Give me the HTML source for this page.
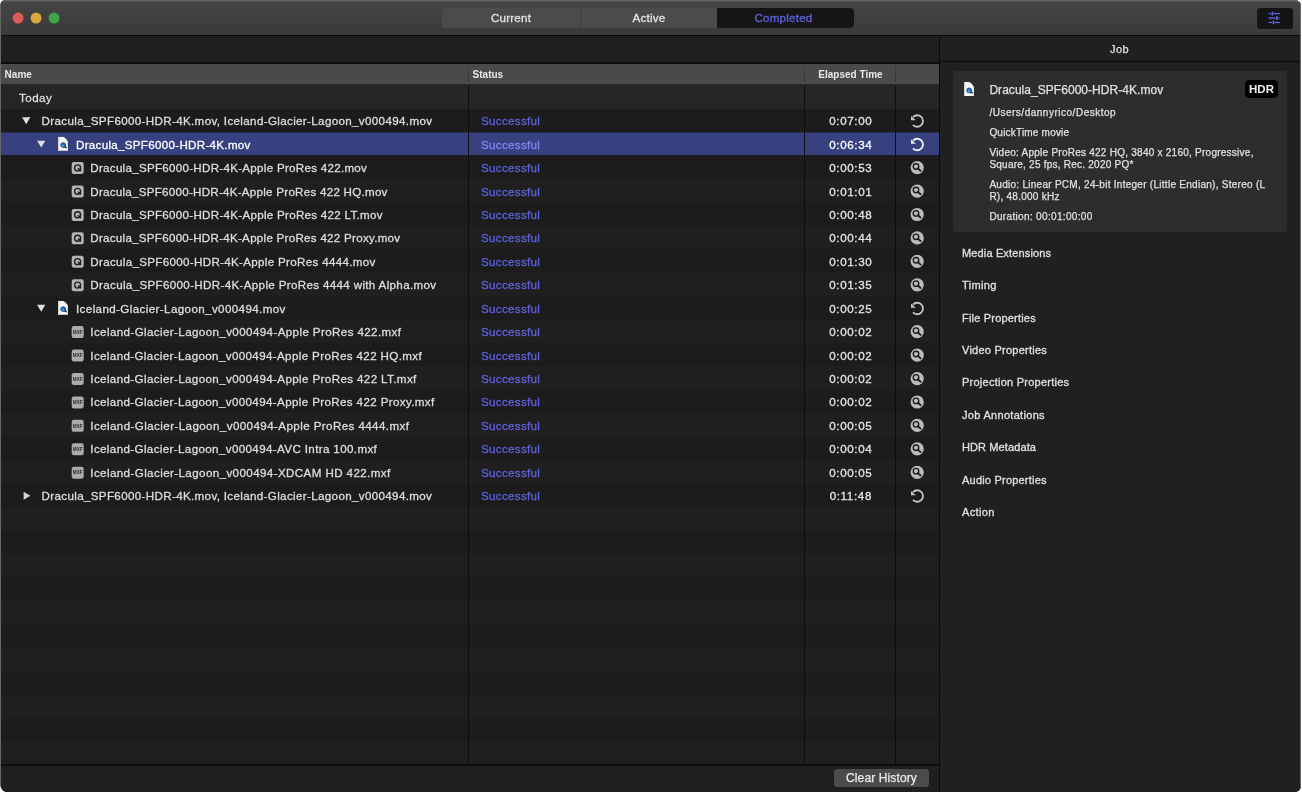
<!DOCTYPE html>
<html lang="en">
<head>
<meta charset="utf-8">
<title>Compressor – Completed</title>
<style>
html,body{margin:0;padding:0;background:#fff;}
body{width:1302px;height:796px;overflow:hidden;position:relative;font-family:"Liberation Sans",sans-serif;font-size:12px;color:#dedede;-webkit-text-stroke:0.25px;}
#win{position:absolute;left:1px;top:0;width:1300px;height:792px;background:#1f1f1f;border-radius:5.5px 6px 6px 6px;overflow:hidden;will-change:transform;}
#edgeL{position:absolute;left:0;top:0;width:10px;height:790px;border-radius:6px;background:#666;}
#edgeR{position:absolute;left:1299px;top:0;width:1px;height:792px;background:#686868;}
#win *{box-sizing:border-box;}
#titlebar{position:absolute;left:0;top:0;width:1300px;height:35px;background:linear-gradient(#666 0,#666 1px,#515151 1px,#515151 2px,#454545 2px,#3a3a3a 34px);}
#tbline{position:absolute;left:0;top:35px;width:1300px;height:1px;background:#0a0a0a;}
#seg{position:absolute;left:441px;top:8px;width:412px;height:20px;border-radius:4px;overflow:hidden;background:#4b4b4b;}
#seg div{position:absolute;top:0;height:21px;line-height:21px;text-align:center;color:#e4e4e4;font-size:11.6px;letter-spacing:0.22px;-webkit-text-stroke:0.3px;}
.sh{display:inline-block;position:relative;transform:translateY(-0.6px);}
#optbtn{position:absolute;left:1255.5px;top:8px;width:36.5px;height:20.5px;border-radius:3.5px;background:#141414;}
#leftband{position:absolute;left:0;top:36px;width:938px;height:26px;background:#1f1f1f;}
#leftline{position:absolute;left:0;top:62px;width:938px;height:2px;background:#0c0c0c;}
#hdr{position:absolute;left:0;top:64px;width:938px;height:20px;background:#4a4a4a;font-size:10px;font-weight:bold;line-height:20px;color:#e8e8e8;-webkit-text-stroke:0;}
#hdr span{position:absolute;top:1px;}
#hdr i{position:absolute;top:2px;width:1px;height:16px;background:#3a3a3a;}
#hdrline{position:absolute;left:0;top:84px;width:938px;height:1px;background:#2c2c2c;}
#table{position:absolute;left:0;top:0;width:938px;height:765px;}
#tablebg{position:absolute;left:0;top:85px;width:938px;height:680px;background:#1c1c1c;}
.row{position:absolute;left:0;width:938px;}
.row.alt{background:#1f1f1f;}
.row.grp{background:#262626;}
.row.sel{background:#38417f;color:#fff;}
.selblend{position:absolute;left:0;width:938px;height:1px;background:#2b2e4e;}
.in{position:absolute;left:0;width:938px;height:14px;line-height:14px;white-space:nowrap;font-size:11.6px;-webkit-text-stroke:0.3px;}
.in span{position:absolute;top:0;}
.in .nm{letter-spacing:0.09px;}
.in .st{left:480px;color:#5f61dd;letter-spacing:0.314px;}
.sel .in .st{color:#7e87f3;}
.in .tm{left:804px;width:91px;text-align:center;color:#e4e4e4;letter-spacing:0.645px;padding-left:0.645px;}
.sel .in .tm{color:#fff;}
.in .i{position:absolute;}
.vline{position:absolute;top:85px;width:1px;height:680px;background:#0e0e0e;}
#botline{position:absolute;left:0;top:764px;width:938px;height:2px;background:#101010;}
#botbar{position:absolute;left:0;top:765px;width:938px;height:27px;background:#1f1f1f;}
#clear{position:absolute;left:833px;top:769px;width:95px;height:18px;border-radius:3.5px;background:#4b4b4b;color:#ececec;text-align:center;line-height:18px;font-size:12px;letter-spacing:0.12px;}
#sep{position:absolute;left:938px;top:36px;width:1px;height:756px;background:#0b0b0b;}
#right{position:absolute;left:939px;top:36px;width:361px;height:756px;background:#202020;}
#jobhdr{position:absolute;left:938px;top:37px;width:361px;height:25px;line-height:25px;text-align:center;font-size:11px;color:#e4e4e4;letter-spacing:0.45px;}
#jobline{position:absolute;left:939px;top:61px;width:361px;height:1px;background:#0b0b0b;}
#card{position:absolute;left:952px;top:71px;width:334px;height:161px;border-radius:3.5px;background:#2d2d2d;}
#card div{position:absolute;left:36.4px;white-space:nowrap;font-size:10px;line-height:12px;color:#e0e0e0;}
#hdrbadge{position:absolute;left:1244px;top:80px;width:33px;height:18px;border-radius:4.5px;background:#000;color:#f0f0f0;font-weight:bold;font-size:11.5px;line-height:19px;text-align:center;-webkit-text-stroke:0;}
.sec{position:absolute;left:961px;font-size:11px;line-height:12px;color:#e0e0e0;white-space:nowrap;letter-spacing:0.111px;-webkit-text-stroke:0.3px;}
</style>
</head>
<body>
<div id="edgeL"></div>
<div id="win">
  <div id="titlebar"></div>
  <svg width="70" height="36" viewBox="0 0 70 36" style="position:absolute;left:0;top:0"><circle cx="17.05" cy="18.05" r="5.5" fill="#dd5953"/><circle cx="35.1" cy="18.05" r="5.5" fill="#d9a83c"/><circle cx="53.1" cy="18.05" r="5.5" fill="#3ea44a"/></svg>
  <div id="seg">
    <div style="left:0;width:138px"><span class="sh">Current</span></div>
    <div style="left:138px;width:137px;border-left:1px solid #3e3e3e"><span class="sh">Active</span></div>
    <div style="left:275px;width:137px;background:#151515;color:#6163df"><span class="sh" style="left:-2px">Completed</span></div>
  </div>
  <div id="optbtn"><svg width="37" height="21" viewBox="0 0 37 21" style="position:absolute;left:-0.6px;top:0"><g fill="#6467f0"><rect x="12.6" y="5" width="2.4" height="1.2"/><rect x="17.9" y="5" width="6" height="1.2"/><rect x="15.6" y="3.8" width="1.7" height="3.6" rx="0.5"/><rect x="12.6" y="9.4" width="6.6" height="1.3"/><rect x="22.8" y="9.4" width="1.1" height="1.3"/><rect x="19.9" y="8.2" width="2" height="3.7" rx="0.6"/><rect x="12.6" y="13.9" width="3.3" height="1.2"/><rect x="18.9" y="13.9" width="5" height="1.2"/><rect x="16.6" y="12.7" width="1.7" height="3.6" rx="0.5"/></g></svg></div>
  <div id="tbline"></div>
  <div id="leftband"></div>
  <div id="leftline"></div>
  <div id="tablebg"></div>
  <div id="table">
<div class="row alt grp" style="top:85px;height:24px"><div class="in" style="top:6px;transform:translateY(-0.2px)"><span class="nm" style="left:18px;letter-spacing:0.441px">Today</span></div></div>
<div class="row" style="top:109px;height:23px"><div class="in" style="top:5px;transform:translateY(0.24px)"><svg class="i" width="10" height="14" viewBox="0 0 10 14" style="left:21px;top:0"><path d="M0.1 3.1 H8.3 L4.2 9.9 Z" fill="#e0e0e0"/></svg><span class="nm" style="left:40.6px;letter-spacing:0.35px">Dracula_SPF6000-HDR-4K.mov, Iceland-Glacier-Lagoon_v000494.mov</span><span class="st">Successful</span><span class="tm">0:07:00</span><svg class="i" width="16" height="16" viewBox="0 0 16 16" style="left:908px;top:-1px"><path d="M4.00 3.85 A5.75 5.75 0 1 1 3.95 11.65" fill="none" stroke="#c4c4c4" stroke-width="1.85"/><path d="M2.00 2.75 V6.95 H6.80 Z" fill="#c4c4c4"/></svg></div></div>
<div class="selblend" style="top:132px"></div><div class="row alt sel" style="top:133px;height:22px"><div class="in" style="top:5px;transform:translateY(-0.32px)"><svg class="i" width="10" height="14" viewBox="0 0 10 14" style="left:36px;top:0"><path d="M0.1 3.1 H8.3 L4.2 9.9 Z" fill="#e0e0e0"/></svg><svg class="i" width="12" height="15" viewBox="0 0 12 15" style="left:57px;top:-1px"><path d="M0 0 H4.8 Q7.8 0.8 10 5.2 V14 H0 Z" fill="#f7f7f7"/><path d="M0 0 H1.3 V14 H0 Z" fill="#d4d4d6"/><path d="M9 5 H10 V14 H9 Z" fill="#dcdcde"/><path d="M6.4 9.4 L8.1 10.9" stroke="#26262c" stroke-width="1.5" stroke-linecap="round"/><circle cx="5.2" cy="8.4" r="2.45" fill="#1c6be0" stroke="#1f2c4a" stroke-width="0.7"/><circle cx="4.8" cy="9" r="1.15" fill="#2fb0f2"/></svg><span class="nm" style="left:75px;letter-spacing:0.3px">Dracula_SPF6000-HDR-4K.mov</span><span class="st">Successful</span><span class="tm">0:06:34</span><svg class="i" width="16" height="16" viewBox="0 0 16 16" style="left:908px;top:-1px"><path d="M4.00 3.85 A5.75 5.75 0 1 1 3.95 11.65" fill="none" stroke="#f0f0f0" stroke-width="1.85"/><path d="M2.00 2.75 V6.95 H6.80 Z" fill="#f0f0f0"/></svg></div></div>
<div class="row" style="top:156px;height:23px"><div class="in" style="top:5px;transform:translateY(0.11px)"><svg class="i" width="13" height="14" viewBox="0 0 13 14" style="left:70px;top:0px"><rect x="0.7" y="0.9" width="12" height="12" rx="2.2" fill="#b4b4b4"/><circle cx="6.6" cy="6.8" r="3" fill="none" stroke="#1c1c1c" stroke-width="1.35"/><path d="M7 7.2 L10 10" stroke="#1c1c1c" stroke-width="1.5"/></svg><span class="nm" style="left:89.3px;letter-spacing:0.28px">Dracula_SPF6000-HDR-4K-Apple ProRes 422.mov</span><span class="st">Successful</span><span class="tm">0:00:53</span><svg class="i" width="15" height="15" viewBox="0 0 15 15" style="left:909px;top:-1px"><circle cx="7.2" cy="7.5" r="6.6" fill="#bcbcbc"/><circle cx="6" cy="6.4" r="2.75" fill="none" stroke="#1a1a1a" stroke-width="1.35"/><path d="M7.9 8.3 L10.6 10.7" stroke="#1a1a1a" stroke-width="1.8" stroke-linecap="round"/></svg></div></div>
<div class="row alt" style="top:179px;height:23px"><div class="in" style="top:6px;transform:translateY(-0.45px)"><svg class="i" width="13" height="14" viewBox="0 0 13 14" style="left:70px;top:0px"><rect x="0.7" y="0.9" width="12" height="12" rx="2.2" fill="#b4b4b4"/><circle cx="6.6" cy="6.8" r="3" fill="none" stroke="#1c1c1c" stroke-width="1.35"/><path d="M7 7.2 L10 10" stroke="#1c1c1c" stroke-width="1.5"/></svg><span class="nm" style="left:89.3px;letter-spacing:0.259px">Dracula_SPF6000-HDR-4K-Apple ProRes 422 HQ.mov</span><span class="st">Successful</span><span class="tm">0:01:01</span><svg class="i" width="15" height="15" viewBox="0 0 15 15" style="left:909px;top:-1px"><circle cx="7.2" cy="7.5" r="6.6" fill="#bcbcbc"/><circle cx="6" cy="6.4" r="2.75" fill="none" stroke="#1a1a1a" stroke-width="1.35"/><path d="M7.9 8.3 L10.6 10.7" stroke="#1a1a1a" stroke-width="1.8" stroke-linecap="round"/></svg></div></div>
<div class="row" style="top:202px;height:24px"><div class="in" style="top:6px;transform:translateY(-0.01px)"><svg class="i" width="13" height="14" viewBox="0 0 13 14" style="left:70px;top:0px"><rect x="0.7" y="0.9" width="12" height="12" rx="2.2" fill="#b4b4b4"/><circle cx="6.6" cy="6.8" r="3" fill="none" stroke="#1c1c1c" stroke-width="1.35"/><path d="M7 7.2 L10 10" stroke="#1c1c1c" stroke-width="1.5"/></svg><span class="nm" style="left:89.3px;letter-spacing:0.283px">Dracula_SPF6000-HDR-4K-Apple ProRes 422 LT.mov</span><span class="st">Successful</span><span class="tm">0:00:48</span><svg class="i" width="15" height="15" viewBox="0 0 15 15" style="left:909px;top:-1px"><circle cx="7.2" cy="7.5" r="6.6" fill="#bcbcbc"/><circle cx="6" cy="6.4" r="2.75" fill="none" stroke="#1a1a1a" stroke-width="1.35"/><path d="M7.9 8.3 L10.6 10.7" stroke="#1a1a1a" stroke-width="1.8" stroke-linecap="round"/></svg></div></div>
<div class="row alt" style="top:226px;height:23px"><div class="in" style="top:5px;transform:translateY(0.43px)"><svg class="i" width="13" height="14" viewBox="0 0 13 14" style="left:70px;top:0px"><rect x="0.7" y="0.9" width="12" height="12" rx="2.2" fill="#b4b4b4"/><circle cx="6.6" cy="6.8" r="3" fill="none" stroke="#1c1c1c" stroke-width="1.35"/><path d="M7 7.2 L10 10" stroke="#1c1c1c" stroke-width="1.5"/></svg><span class="nm" style="left:89.3px;letter-spacing:0.27px">Dracula_SPF6000-HDR-4K-Apple ProRes 422 Proxy.mov</span><span class="st">Successful</span><span class="tm">0:00:44</span><svg class="i" width="15" height="15" viewBox="0 0 15 15" style="left:909px;top:-1px"><circle cx="7.2" cy="7.5" r="6.6" fill="#bcbcbc"/><circle cx="6" cy="6.4" r="2.75" fill="none" stroke="#1a1a1a" stroke-width="1.35"/><path d="M7.9 8.3 L10.6 10.7" stroke="#1a1a1a" stroke-width="1.8" stroke-linecap="round"/></svg></div></div>
<div class="row" style="top:249px;height:24px"><div class="in" style="top:6px;transform:translateY(-0.14px)"><svg class="i" width="13" height="14" viewBox="0 0 13 14" style="left:70px;top:0px"><rect x="0.7" y="0.9" width="12" height="12" rx="2.2" fill="#b4b4b4"/><circle cx="6.6" cy="6.8" r="3" fill="none" stroke="#1c1c1c" stroke-width="1.35"/><path d="M7 7.2 L10 10" stroke="#1c1c1c" stroke-width="1.5"/></svg><span class="nm" style="left:89.3px;letter-spacing:0.319px">Dracula_SPF6000-HDR-4K-Apple ProRes 4444.mov</span><span class="st">Successful</span><span class="tm">0:01:30</span><svg class="i" width="15" height="15" viewBox="0 0 15 15" style="left:909px;top:-1px"><circle cx="7.2" cy="7.5" r="6.6" fill="#bcbcbc"/><circle cx="6" cy="6.4" r="2.75" fill="none" stroke="#1a1a1a" stroke-width="1.35"/><path d="M7.9 8.3 L10.6 10.7" stroke="#1a1a1a" stroke-width="1.8" stroke-linecap="round"/></svg></div></div>
<div class="row alt" style="top:273px;height:23px"><div class="in" style="top:5px;transform:translateY(0.3px)"><svg class="i" width="13" height="14" viewBox="0 0 13 14" style="left:70px;top:0px"><rect x="0.7" y="0.9" width="12" height="12" rx="2.2" fill="#b4b4b4"/><circle cx="6.6" cy="6.8" r="3" fill="none" stroke="#1c1c1c" stroke-width="1.35"/><path d="M7 7.2 L10 10" stroke="#1c1c1c" stroke-width="1.5"/></svg><span class="nm" style="left:89.3px;letter-spacing:0.341px">Dracula_SPF6000-HDR-4K-Apple ProRes 4444 with Alpha.mov</span><span class="st">Successful</span><span class="tm">0:01:35</span><svg class="i" width="15" height="15" viewBox="0 0 15 15" style="left:909px;top:-1px"><circle cx="7.2" cy="7.5" r="6.6" fill="#bcbcbc"/><circle cx="6" cy="6.4" r="2.75" fill="none" stroke="#1a1a1a" stroke-width="1.35"/><path d="M7.9 8.3 L10.6 10.7" stroke="#1a1a1a" stroke-width="1.8" stroke-linecap="round"/></svg></div></div>
<div class="row" style="top:296px;height:24px"><div class="in" style="top:6px;transform:translateY(-0.26px)"><svg class="i" width="10" height="14" viewBox="0 0 10 14" style="left:36px;top:0"><path d="M0.1 3.1 H8.3 L4.2 9.9 Z" fill="#e0e0e0"/></svg><svg class="i" width="12" height="15" viewBox="0 0 12 15" style="left:57px;top:-1px"><path d="M0 0 H4.8 Q7.8 0.8 10 5.2 V14 H0 Z" fill="#f7f7f7"/><path d="M0 0 H1.3 V14 H0 Z" fill="#d4d4d6"/><path d="M9 5 H10 V14 H9 Z" fill="#dcdcde"/><path d="M6.4 9.4 L8.1 10.9" stroke="#26262c" stroke-width="1.5" stroke-linecap="round"/><circle cx="5.2" cy="8.4" r="2.45" fill="#1c6be0" stroke="#1f2c4a" stroke-width="0.7"/><circle cx="4.8" cy="9" r="1.15" fill="#2fb0f2"/></svg><span class="nm" style="left:75px;letter-spacing:0.389px">Iceland-Glacier-Lagoon_v000494.mov</span><span class="st">Successful</span><span class="tm">0:00:25</span><svg class="i" width="16" height="16" viewBox="0 0 16 16" style="left:908px;top:-1px"><path d="M4.00 3.85 A5.75 5.75 0 1 1 3.95 11.65" fill="none" stroke="#c4c4c4" stroke-width="1.85"/><path d="M2.00 2.75 V6.95 H6.80 Z" fill="#c4c4c4"/></svg></div></div>
<div class="row alt" style="top:320px;height:23px"><div class="in" style="top:5px;transform:translateY(0.18px)"><svg class="i" width="13" height="14" viewBox="0 0 13 14" style="left:70px;top:0px"><rect x="0.7" y="0.9" width="12" height="12" rx="2.2" fill="#ababab"/><text x="6.7" y="8.6" font-size="4.7" font-weight="bold" text-anchor="middle" fill="#303030" font-family="Liberation Sans, sans-serif" textLength="10" lengthAdjust="spacingAndGlyphs">MXF</text></svg><span class="nm" style="left:89.3px;letter-spacing:0.388px">Iceland-Glacier-Lagoon_v000494-Apple ProRes 422.mxf</span><span class="st">Successful</span><span class="tm">0:00:02</span><svg class="i" width="15" height="15" viewBox="0 0 15 15" style="left:909px;top:-1px"><circle cx="7.2" cy="7.5" r="6.6" fill="#bcbcbc"/><circle cx="6" cy="6.4" r="2.75" fill="none" stroke="#1a1a1a" stroke-width="1.35"/><path d="M7.9 8.3 L10.6 10.7" stroke="#1a1a1a" stroke-width="1.8" stroke-linecap="round"/></svg></div></div>
<div class="row" style="top:343px;height:23px"><div class="in" style="top:6px;transform:translateY(-0.39px)"><svg class="i" width="13" height="14" viewBox="0 0 13 14" style="left:70px;top:0px"><rect x="0.7" y="0.9" width="12" height="12" rx="2.2" fill="#ababab"/><text x="6.7" y="8.6" font-size="4.7" font-weight="bold" text-anchor="middle" fill="#303030" font-family="Liberation Sans, sans-serif" textLength="10" lengthAdjust="spacingAndGlyphs">MXF</text></svg><span class="nm" style="left:89.3px;letter-spacing:0.368px">Iceland-Glacier-Lagoon_v000494-Apple ProRes 422 HQ.mxf</span><span class="st">Successful</span><span class="tm">0:00:02</span><svg class="i" width="15" height="15" viewBox="0 0 15 15" style="left:909px;top:-1px"><circle cx="7.2" cy="7.5" r="6.6" fill="#bcbcbc"/><circle cx="6" cy="6.4" r="2.75" fill="none" stroke="#1a1a1a" stroke-width="1.35"/><path d="M7.9 8.3 L10.6 10.7" stroke="#1a1a1a" stroke-width="1.8" stroke-linecap="round"/></svg></div></div>
<div class="row alt" style="top:366px;height:24px"><div class="in" style="top:6px;transform:translateY(0.05px)"><svg class="i" width="13" height="14" viewBox="0 0 13 14" style="left:70px;top:0px"><rect x="0.7" y="0.9" width="12" height="12" rx="2.2" fill="#ababab"/><text x="6.7" y="8.6" font-size="4.7" font-weight="bold" text-anchor="middle" fill="#303030" font-family="Liberation Sans, sans-serif" textLength="10" lengthAdjust="spacingAndGlyphs">MXF</text></svg><span class="nm" style="left:89.3px;letter-spacing:0.379px">Iceland-Glacier-Lagoon_v000494-Apple ProRes 422 LT.mxf</span><span class="st">Successful</span><span class="tm">0:00:02</span><svg class="i" width="15" height="15" viewBox="0 0 15 15" style="left:909px;top:-1px"><circle cx="7.2" cy="7.5" r="6.6" fill="#bcbcbc"/><circle cx="6" cy="6.4" r="2.75" fill="none" stroke="#1a1a1a" stroke-width="1.35"/><path d="M7.9 8.3 L10.6 10.7" stroke="#1a1a1a" stroke-width="1.8" stroke-linecap="round"/></svg></div></div>
<div class="row" style="top:390px;height:23px"><div class="in" style="top:5px;transform:translateY(0.49px)"><svg class="i" width="13" height="14" viewBox="0 0 13 14" style="left:70px;top:0px"><rect x="0.7" y="0.9" width="12" height="12" rx="2.2" fill="#ababab"/><text x="6.7" y="8.6" font-size="4.7" font-weight="bold" text-anchor="middle" fill="#303030" font-family="Liberation Sans, sans-serif" textLength="10" lengthAdjust="spacingAndGlyphs">MXF</text></svg><span class="nm" style="left:89.3px;letter-spacing:0.369px">Iceland-Glacier-Lagoon_v000494-Apple ProRes 422 Proxy.mxf</span><span class="st">Successful</span><span class="tm">0:00:02</span><svg class="i" width="15" height="15" viewBox="0 0 15 15" style="left:909px;top:-1px"><circle cx="7.2" cy="7.5" r="6.6" fill="#bcbcbc"/><circle cx="6" cy="6.4" r="2.75" fill="none" stroke="#1a1a1a" stroke-width="1.35"/><path d="M7.9 8.3 L10.6 10.7" stroke="#1a1a1a" stroke-width="1.8" stroke-linecap="round"/></svg></div></div>
<div class="row alt" style="top:413px;height:24px"><div class="in" style="top:6px;transform:translateY(-0.07px)"><svg class="i" width="13" height="14" viewBox="0 0 13 14" style="left:70px;top:0px"><rect x="0.7" y="0.9" width="12" height="12" rx="2.2" fill="#ababab"/><text x="6.7" y="8.6" font-size="4.7" font-weight="bold" text-anchor="middle" fill="#303030" font-family="Liberation Sans, sans-serif" textLength="10" lengthAdjust="spacingAndGlyphs">MXF</text></svg><span class="nm" style="left:89.3px;letter-spacing:0.41px">Iceland-Glacier-Lagoon_v000494-Apple ProRes 4444.mxf</span><span class="st">Successful</span><span class="tm">0:00:05</span><svg class="i" width="15" height="15" viewBox="0 0 15 15" style="left:909px;top:-1px"><circle cx="7.2" cy="7.5" r="6.6" fill="#bcbcbc"/><circle cx="6" cy="6.4" r="2.75" fill="none" stroke="#1a1a1a" stroke-width="1.35"/><path d="M7.9 8.3 L10.6 10.7" stroke="#1a1a1a" stroke-width="1.8" stroke-linecap="round"/></svg></div></div>
<div class="row" style="top:437px;height:23px"><div class="in" style="top:5px;transform:translateY(0.36px)"><svg class="i" width="13" height="14" viewBox="0 0 13 14" style="left:70px;top:0px"><rect x="0.7" y="0.9" width="12" height="12" rx="2.2" fill="#ababab"/><text x="6.7" y="8.6" font-size="4.7" font-weight="bold" text-anchor="middle" fill="#303030" font-family="Liberation Sans, sans-serif" textLength="10" lengthAdjust="spacingAndGlyphs">MXF</text></svg><span class="nm" style="left:89.3px;letter-spacing:0.369px">Iceland-Glacier-Lagoon_v000494-AVC Intra 100.mxf</span><span class="st">Successful</span><span class="tm">0:00:04</span><svg class="i" width="15" height="15" viewBox="0 0 15 15" style="left:909px;top:-1px"><circle cx="7.2" cy="7.5" r="6.6" fill="#bcbcbc"/><circle cx="6" cy="6.4" r="2.75" fill="none" stroke="#1a1a1a" stroke-width="1.35"/><path d="M7.9 8.3 L10.6 10.7" stroke="#1a1a1a" stroke-width="1.8" stroke-linecap="round"/></svg></div></div>
<div class="row alt" style="top:460px;height:24px"><div class="in" style="top:6px;transform:translateY(-0.2px)"><svg class="i" width="13" height="14" viewBox="0 0 13 14" style="left:70px;top:0px"><rect x="0.7" y="0.9" width="12" height="12" rx="2.2" fill="#ababab"/><text x="6.7" y="8.6" font-size="4.7" font-weight="bold" text-anchor="middle" fill="#303030" font-family="Liberation Sans, sans-serif" textLength="10" lengthAdjust="spacingAndGlyphs">MXF</text></svg><span class="nm" style="left:89.3px;letter-spacing:0.398px">Iceland-Glacier-Lagoon_v000494-XDCAM HD 422.mxf</span><span class="st">Successful</span><span class="tm">0:00:05</span><svg class="i" width="15" height="15" viewBox="0 0 15 15" style="left:909px;top:-1px"><circle cx="7.2" cy="7.5" r="6.6" fill="#bcbcbc"/><circle cx="6" cy="6.4" r="2.75" fill="none" stroke="#1a1a1a" stroke-width="1.35"/><path d="M7.9 8.3 L10.6 10.7" stroke="#1a1a1a" stroke-width="1.8" stroke-linecap="round"/></svg></div></div>
<div class="row" style="top:484px;height:23px"><div class="in" style="top:5px;transform:translateY(0.24px)"><svg class="i" width="10" height="14" viewBox="0 0 10 14" style="left:22px;top:0"><path d="M0.6 2.4 V10.6 L7.4 6.5 Z" fill="#d6d6d6"/></svg><span class="nm" style="left:40.6px;letter-spacing:0.348px">Dracula_SPF6000-HDR-4K.mov, Iceland-Glacier-Lagoon_v000494.mov</span><span class="st">Successful</span><span class="tm">0:11:48</span><svg class="i" width="16" height="16" viewBox="0 0 16 16" style="left:908px;top:-1px"><path d="M4.00 3.85 A5.75 5.75 0 1 1 3.95 11.65" fill="none" stroke="#c4c4c4" stroke-width="1.85"/><path d="M2.00 2.75 V6.95 H6.80 Z" fill="#c4c4c4"/></svg></div></div>
<div class="row alt" style="top:507px;height:24px"></div>
<div class="row alt" style="top:554px;height:23px"></div>
<div class="row alt" style="top:601px;height:23px"></div>
<div class="row alt" style="top:648px;height:23px"></div>
<div class="row alt" style="top:695px;height:23px"></div>
<div class="row alt" style="top:741px;height:23px"></div>
  </div>
  <div id="hdr"><span style="left:3.6px">Name</span><i style="left:467px"></i><span style="left:471.6px">Status</span><i style="left:803px"></i><span style="left:804px;width:91px;text-align:center">Elapsed Time</span><i style="left:894px"></i></div>
  <div id="hdrline"></div>
  <div class="vline" style="left:467px"></div>
  <div class="vline" style="left:803px"></div>
  <div class="vline" style="left:894px"></div>
  <div id="botbar"></div>
  <div id="botline"></div>
  <div id="clear">Clear History</div>
  <div id="right"></div>
  <div id="sep"></div>
  <div id="jobhdr">Job</div>
  <div id="jobline"></div>
  <div id="card">
    <svg style="position:absolute;left:11px;top:11px" width="12" height="15" viewBox="0 0 12 15" ><path d="M0 0 H4.8 Q7.8 0.8 10 5.2 V14 H0 Z" fill="#f7f7f7"/><path d="M0 0 H1.3 V14 H0 Z" fill="#d4d4d6"/><path d="M9 5 H10 V14 H9 Z" fill="#dcdcde"/><path d="M6.4 9.4 L8.1 10.9" stroke="#26262c" stroke-width="1.5" stroke-linecap="round"/><circle cx="5.2" cy="8.4" r="2.45" fill="#1c6be0" stroke="#1f2c4a" stroke-width="0.7"/><circle cx="4.8" cy="9" r="1.15" fill="#2fb0f2"/></svg>
    <div style="top:12px;font-size:12px;line-height:14px;letter-spacing:0.041px">Dracula_SPF6000-HDR-4K.mov</div>
<div style="top:36px;letter-spacing:0.512px">/Users/dannyrico/Desktop</div>
<div style="top:56px;letter-spacing:0.202px">QuickTime movie</div>
<div style="top:76px;letter-spacing:0.249px">Video: Apple ProRes 422 HQ, 3840 x 2160, Progressive,</div>
<div style="top:88px;letter-spacing:0.237px">Square, 25 fps, Rec. 2020 PQ*</div>
<div style="top:108px;letter-spacing:0.273px">Audio: Linear PCM, 24-bit Integer (Little Endian), Stereo (L</div>
<div style="top:120px;letter-spacing:0.257px">R), 48.000 kHz</div>
<div style="top:140px;letter-spacing:0.334px">Duration: 00:01:00:00</div>
  </div>
  <div id="hdrbadge">HDR</div>
<div class="sec" style="top:247px;transform:translateY(-0.3px);letter-spacing:0.145px">Media Extensions</div>
<div class="sec" style="top:279px;transform:translateY(0.14px);letter-spacing:0.338px">Timing</div>
<div class="sec" style="top:312px;transform:translateY(-0.42px);letter-spacing:0.198px">File Properties</div>
<div class="sec" style="top:344px;transform:translateY(0.02px);letter-spacing:0.245px">Video Properties</div>
<div class="sec" style="top:376px;transform:translateY(0.46px);letter-spacing:0.25px">Projection Properties</div>
<div class="sec" style="top:409px;transform:translateY(-0.1px);letter-spacing:0.307px">Job Annotations</div>
<div class="sec" style="top:441px;transform:translateY(0.34px);letter-spacing:0.112px">HDR Metadata</div>
<div class="sec" style="top:474px;transform:translateY(-0.22px);letter-spacing:0.211px">Audio Properties</div>
<div class="sec" style="top:506px;transform:translateY(0.22px);letter-spacing:0.344px">Action</div>
  <div id="edgeR"></div>
</div>
</body>
</html>
